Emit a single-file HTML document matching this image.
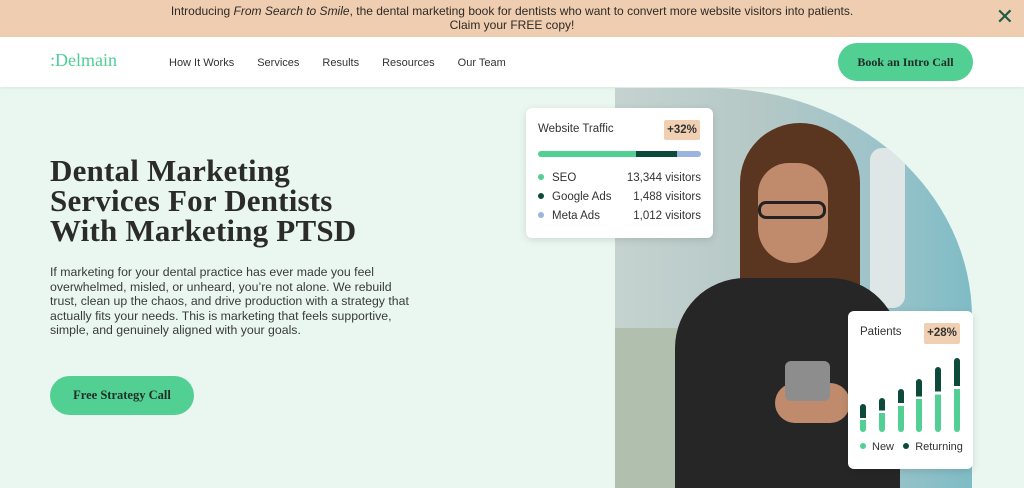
<!DOCTYPE html>
<html><head><style>
*{margin:0;padding:0;box-sizing:border-box}
body{width:1024px;height:488px;overflow:hidden;background:#e9f7f0;font-family:"Liberation Sans",sans-serif;position:relative}
.banner{position:absolute;left:0;top:0;width:1024px;height:37px;background:#efcdb0;text-align:center;font-size:12px;line-height:14px;color:#2e2a26;padding-top:4px}
.x{position:absolute;right:10px;top:6px;font-size:22px;color:#1f5a4a;line-height:22px}
.nav{position:absolute;top:37px;left:0;width:1024px;height:50px;background:#fff;box-shadow:0 1px 3px rgba(0,0,0,.08)}
.logo{position:absolute;left:50px;top:13px;font-family:"Liberation Serif",serif;font-size:18px;color:#4fcf96}
.links{position:absolute;top:20px;left:169px;font-size:11px;color:#333}
.links span{margin-right:23px}
.cta{position:absolute;left:838px;top:6px;width:135px;height:38px;border-radius:19px;background:#52cf92;font-family:"Liberation Serif",serif;font-weight:bold;font-size:12px;color:#1f2f28;text-align:center;line-height:38px}
h1{position:absolute;left:50px;top:156px;font-family:"Liberation Serif",serif;font-weight:bold;font-size:31px;line-height:30px;color:#2b2b2b;letter-spacing:0.2px}
p{position:absolute;left:50px;top:265px;width:370px;font-size:12.3px;line-height:14.6px;color:#3a3a3a}
.btn{position:absolute;left:50px;top:376px;width:144px;height:39px;border-radius:20px;background:#52cf92;font-family:"Liberation Serif",serif;font-weight:bold;font-size:12.5px;color:#1f2f28;text-align:center;line-height:39px}
.photo{position:absolute;left:615px;top:88px;width:357px;height:400px;border-radius:0 260px 0 0/0 230px 0 0;overflow:hidden;background:linear-gradient(90deg,#c5d3d0 0%,#b5c8c6 40%,#9fc4c9 70%,#7fbcc6 100%)}
.card{position:absolute;background:#fff;border-radius:6px;box-shadow:0 2px 8px rgba(0,0,0,.12);font-size:11.5px;color:#333}
.badge{position:absolute;background:#f1cfb2;font-weight:bold;font-size:11.5px;text-align:center;border-radius:2px}
.dot{display:inline-block;width:6px;height:6px;border-radius:50%;margin-right:8px;vertical-align:1px}
.row{position:absolute;left:12px;right:12px;height:16px}
.row b{font-weight:normal;position:absolute;right:0}
.bar{position:absolute;bottom:37px;width:6px;border-radius:3px;overflow:hidden}
</style></head><body>
<div class="banner">Introducing <i>From Search to Smile</i>, the dental marketing book for dentists who want to convert more website visitors into patients.<br>Claim your FREE copy!<div class="x">✕</div></div>
<div class="nav"><div class="logo">:Delmain</div>
<div class="links"><span>How It Works</span><span>Services</span><span>Results</span><span>Resources</span><span>Our Team</span></div>
<div class="cta">Book an Intro Call</div></div>
<h1>Dental Marketing<br>Services For Dentists<br>With Marketing PTSD</h1>
<p>If marketing for your dental practice has ever made you feel overwhelmed, misled, or unheard, you’re not alone. We rebuild trust, clean up the chaos, and drive production with a strategy that actually fits your needs. This is marketing that feels supportive, simple, and genuinely aligned with your goals.</p>
<div class="btn">Free Strategy Call</div>
<div class="photo">
<div style="position:absolute;left:0;top:240px;width:80px;height:160px;background:#b1bfae"></div>
<div style="position:absolute;left:255px;top:60px;width:35px;height:160px;background:#dfe6e6;border-radius:12px"></div>
<div style="position:absolute;left:125px;top:35px;width:120px;height:230px;background:#5a3520;border-radius:60px 60px 40px 30px"></div>
<div style="position:absolute;left:143px;top:75px;width:70px;height:100px;background:#c08b6c;border-radius:35px 35px 40px 40px"></div>
<div style="position:absolute;left:143px;top:113px;width:68px;height:18px;border:3px solid #222;border-radius:8px"></div>
<div style="position:absolute;left:60px;top:190px;width:225px;height:230px;background:#262626;border-radius:70px 70px 0 0"></div>
<div style="position:absolute;left:160px;top:295px;width:75px;height:40px;background:#c08b6c;border-radius:20px"></div>
<div style="position:absolute;left:170px;top:273px;width:45px;height:40px;background:#8d8d8d;border-radius:6px"></div>
</div>
<div class="card" style="left:526px;top:108px;width:187px;height:130px">
<div style="position:absolute;left:12px;top:15px">Website Traffic</div>
<div class="badge" style="left:138px;top:12px;width:36px;height:20px;line-height:20px">+32%</div>
<div style="position:absolute;left:12px;top:43px;width:163px;height:6px;border-radius:3px;overflow:hidden;display:flex"><div style="width:98px;background:#52cf92"></div><div style="width:41px;background:#0c4a3a"></div><div style="flex:1;background:#9bb4dd"></div></div>
<div class="row" style="top:64px"><span class="dot" style="background:#52cf92"></span>SEO<b>13,344 visitors</b></div>
<div class="row" style="top:83px"><span class="dot" style="background:#0c4a3a"></span>Google Ads<b>1,488 visitors</b></div>
<div class="row" style="top:102px"><span class="dot" style="background:#9bb4dd"></span>Meta Ads<b>1,012 visitors</b></div>
</div>
<div class="card" style="left:848px;top:311px;width:125px;height:158px">
<div style="position:absolute;left:12px;top:15px">Patients</div>
<div class="badge" style="left:76px;top:12px;width:36px;height:21px;line-height:21px">+28%</div>
<div class="bar" style="left:12px;height:28px;background:linear-gradient(#0c4a3a 50%,#fff 50% 58%,#52cf92 58%)"></div>
<div class="bar" style="left:31px;height:34px;background:linear-gradient(#0c4a3a 37%,#fff 37% 44%,#52cf92 44%)"></div>
<div class="bar" style="left:50px;height:43px;background:linear-gradient(#0c4a3a 33%,#fff 33% 39%,#52cf92 39%)"></div>
<div class="bar" style="left:68px;height:53px;background:linear-gradient(#0c4a3a 33%,#fff 33% 38%,#52cf92 38%)"></div>
<div class="bar" style="left:87px;height:65px;background:linear-gradient(#0c4a3a 38%,#fff 38% 42%,#52cf92 42%)"></div>
<div class="bar" style="left:106px;height:74px;background:linear-gradient(#0c4a3a 38%,#fff 38% 42%,#52cf92 42%)"></div>
<div style="position:absolute;left:12px;top:130px;font-size:11px"><span class="dot" style="background:#52cf92;margin-right:6px"></span>New &nbsp;&nbsp;<span class="dot" style="background:#0c4a3a;margin-right:6px"></span>Returning</div>
</div>
</body></html>
